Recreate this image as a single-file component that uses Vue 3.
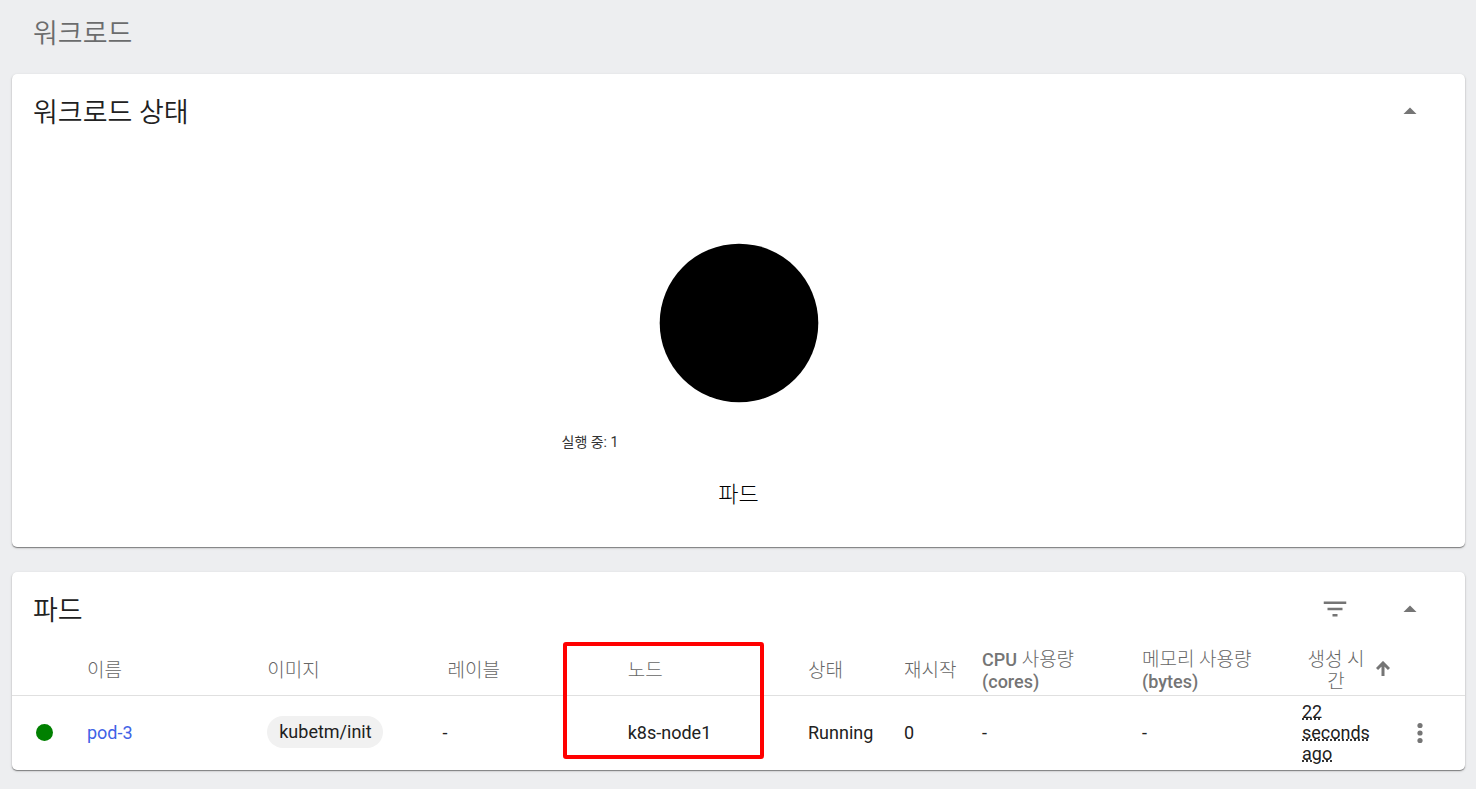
<script setup>
const pods = [
  {
    name: 'pod-3',
    image: 'kubetm/init',
    labels: '-',
    node: 'k8s-node1',
    status: 'Running',
    restarts: 0,
    cpu: '-',
    memory: '-',
    created: '22 seconds ago',
  },
]
</script>

<template>
  <main class="page">
    <h1 class="page-title">워크로드</h1>

    <section class="card">
      <header class="card-header">
        <h2>워크로드 상태</h2>
        <button class="icon-button" type="button" aria-label="접기">
          <svg width="24" height="24" viewBox="0 0 24 24"><path d="M5.500 15l6.500-6.500 6.500 6.500z" /></svg>
        </button>
      </header>
      <div class="chart">
        <svg class="pie" width="160" height="160" viewBox="0 0 160 160" role="img" aria-label="파드">
          <circle cx="80" cy="80" r="79.300" />
        </svg>
        <p class="legend">실행 중: 1</p>
        <p class="chart-name">파드</p>
      </div>
    </section>

    <section class="card">
      <header class="card-header">
        <h2>파드</h2>
        <button class="icon-button filter" type="button" aria-label="필터">
          <svg width="30" height="30" viewBox="0 0 24 24"><path d="M10 18h4v-2h-4v2zM3 6v2h18V6H3zm3 7h12v-2H6v2z" /></svg>
        </button>
        <button class="icon-button" type="button" aria-label="접기">
          <svg width="24" height="24" viewBox="0 0 24 24"><path d="M5.500 15l6.500-6.500 6.500 6.500z" /></svg>
        </button>
      </header>
      <table class="pods">
        <colgroup>
          <col class="c-dot" />
          <col /><col /><col /><col />
          <col class="c-status" />
          <col class="c-restarts" />
          <col class="c-usage" />
          <col class="c-usage" />
          <col class="c-created" />
          <col class="c-menu" />
        </colgroup>
        <thead>
          <tr>
            <td></td>
            <th>이름</th>
            <th>이미지</th>
            <th>레이블</th>
            <th class="node-head">노드<span class="highlight"></span></th>
            <th>상태</th>
            <th>재시작</th>
            <th><span class="latin">CPU</span> 사용량<br /><span class="latin">(cores)</span></th>
            <th>메모리 사용량<br /><span class="latin">(bytes)</span></th>
            <th>
              <button class="sort" type="button">
                <span>생성 시간</span>
                <svg width="14" height="20" viewBox="0 0 14 20"><path d="M7 15V2M1 8l6-6 6 6" /></svg>
              </button>
            </th>
            <td></td>
          </tr>
        </thead>
        <tbody>
          <tr v-for="pod in pods" :key="pod.name">
            <td class="dot-cell"><span class="dot"></span></td>
            <td><a href="#">{{ pod.name }}</a></td>
            <td><span class="chip">{{ pod.image }}</span></td>
            <td><span class="labels">{{ pod.labels }}</span></td>
            <td>{{ pod.node }}</td>
            <td>{{ pod.status }}</td>
            <td>{{ pod.restarts }}</td>
            <td>{{ pod.cpu }}</td>
            <td>{{ pod.memory }}</td>
            <td><span class="age">{{ pod.created }}</span></td>
            <td class="menu-cell">
              <button class="icon-button" type="button" aria-label="메뉴">
                <svg width="24" height="30" viewBox="0 0 24 30">
                  <circle cx="12" cy="8.500" r="2.600" /><circle cx="12" cy="16" r="2.600" /><circle cx="12" cy="23.500" r="2.600" />
                </svg>
              </button>
            </td>
          </tr>
        </tbody>
      </table>
    </section>
  </main>
</template>

<style>
body {
  background: #edeef0;
}
</style>

<style scoped>
.page {
  padding: 0 11px 18px 12px;
  font-family: Roboto, "Noto Sans CJK KR", sans-serif;
  font-size: 18px;
  line-height: 21px;
  color: #212121;
}
h1,
h2 {
  margin: 0;
  font-size: 27px;
  font-weight: 350;
  line-height: 40px;
}
.page-title {
  padding: 14px 21px 20px;
  color: #6b6c6d;
}
.card {
  background: #fff;
  border-radius: 5px;
  box-shadow: 0 1px 1px rgba(0, 0, 0, 0.4), 0 1px 3px rgba(0, 0, 0, 0.16);
}
.card + .card {
  margin-top: 25px;
}
.card-header {
  display: flex;
  align-items: center;
  height: 74px;
  padding: 0 43px 0 21px;
}
.card-header h2 {
  flex: 1;
  padding-top: 3px;
}
.icon-button {
  display: flex;
  padding: 0;
  border: 0;
  background: none;
}
.icon-button svg {
  fill: #757575;
}
.filter {
  margin-right: 48px;
}
.chart {
  display: flex;
  flex-direction: column;
  align-items: center;
  padding: 95px 0 40px;
}
.legend {
  width: 354px;
  margin: 29px 0 0;
  font-size: 14px;
  color: #333;
}
.chart-name {
  margin: 29px 0 0;
  font-size: 22px;
  font-weight: 300;
  line-height: 25px;
  color: #000;
}
.pods {
  width: 100%;
  table-layout: fixed;
  border-collapse: collapse;
}
.c-dot {
  width: 75px;
}
.c-status {
  width: 96px;
}
.c-restarts {
  width: 78px;
}
.c-usage {
  width: 160px;
}
.c-created {
  width: 93px;
}
.c-menu {
  width: 70px;
}
th,
td {
  padding: 0;
  text-align: left;
  vertical-align: middle;
}
th {
  height: 49px;
  font-size: 19px;
  font-weight: 300;
  line-height: 22px;
  color: #666;
}
.latin {
  font-size: 18px;
  font-weight: 500;
  color: #757575;
}
thead tr {
  border-bottom: 1px solid #e0e0e0;
}
tbody td {
  height: 72px;
  padding-bottom: 2px;
}
.node-head {
  position: relative;
}
.highlight {
  position: absolute;
  top: -4px;
  left: -65px;
  right: 44px;
  height: 109px;
  border: 4px solid #f00;
  border-radius: 3px;
  z-index: 1;
  pointer-events: none;
}
.sort {
  display: flex;
  align-items: center;
  gap: 8px;
  padding: 0 0 0 2px;
  border: 0;
  background: none;
  font: inherit;
  color: inherit;
}
.sort span {
  width: 64px;
  text-align: center;
  word-break: break-all;
}
.sort svg {
  flex: none;
  fill: none;
  stroke: #757575;
  stroke-width: 3;
}
tbody .dot-cell {
  padding-left: 24px;
}
.dot {
  display: block;
  width: 17px;
  height: 17px;
  border-radius: 50%;
  background: #008000;
}
a {
  color: #3f63e6;
  text-decoration: none;
}
.chip {
  display: inline-block;
  padding: 0 11px 0 12px;
  border-radius: 16px;
  background: #f1f1f1;
  line-height: 32px;
}
.labels {
  display: block;
  margin-left: -5px;
}
tbody .menu-cell {
  padding-left: 13px;
}
.age {
  display: block;
  width: 68px;
  text-decoration: underline dotted;
}
</style>
